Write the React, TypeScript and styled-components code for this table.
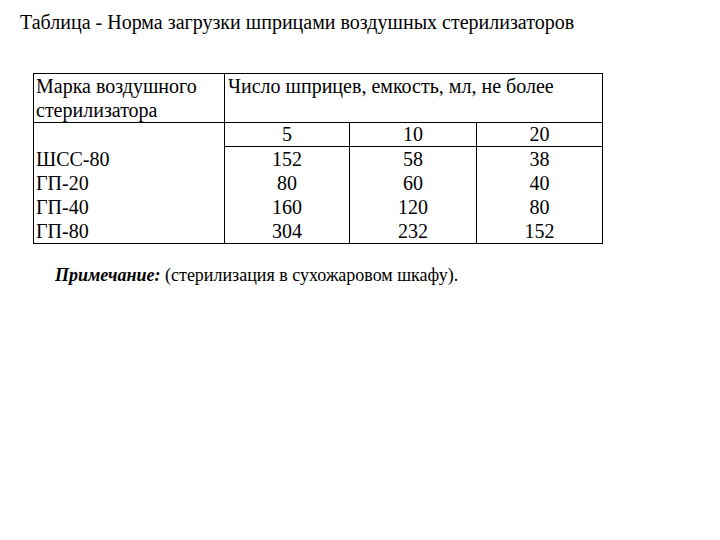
import React, { FC } from "react";
import styled, { createGlobalStyle } from "styled-components";

const GlobalStyle = createGlobalStyle`
    html, body {
        margin: 0;
        padding: 0;
        background: #ffffff;
    }
    body {
        font-family: "Liberation Serif", "Times New Roman", serif;
        color: #000000;
    }
`;

const Page = styled.div`
    width: 720px;
    height: 540px;
    padding: 10px 0 0 20px;
    box-sizing: border-box;
`;

const Title = styled.h1`
    margin: 0;
    font-size: 20px;
    font-weight: normal;
    line-height: 24px;
`;

const Table = styled.table`
    margin: 39px 0 0 13px;
    width: 569px;
    table-layout: fixed;
    border-collapse: collapse;
    font-size: 20px;
    line-height: 24px;

    td {
        border: 1px solid #000;
        padding: 0;
        vertical-align: top;
    }
`;

const NameCell = styled.td`
    padding: 0 2px !important;
    white-space: nowrap;
`;

const HeadCell = styled.td`
    height: 46px;
    padding: 0 3px !important;
    white-space: nowrap;
`;

const NumCell = styled.td<{ $sub?: boolean }>`
    text-align: center;
    line-height: ${(p) => (p.$sub ? "23px" : "24px")};
`;

const Lines = styled.div`
    display: flex;
    flex-direction: column;
`;

const Note = styled.p`
    margin: 19px 0 0 35px;
    font-size: 18px;
    line-height: 24px;

    b {
        font-style: italic;
    }
`;

const models = ["ШСС-80", "ГП-20", "ГП-40", "ГП-80"];
const volumes = [
    { ml: "5", counts: ["152", "80", "160", "304"] },
    { ml: "10", counts: ["58", "60", "120", "232"] },
    { ml: "20", counts: ["38", "40", "80", "152"] },
];
const colWidths = [191, 125, 127, 126];

const App: FC = () => {
    return <Page>
        <GlobalStyle />
        <Title>Таблица - Норма загрузки шприцами воздушных стерилизаторов</Title>
        <Table>
            <colgroup>
                {colWidths.map((w, i) => <col key={i} width={w} />)}
            </colgroup>
            <tbody>
                <tr>
                    <NameCell>Марка воздушного<br />стерилизатора</NameCell>
                    <HeadCell colSpan={3}>Число шприцев, емкость, мл, не более</HeadCell>
                </tr>
                <tr>
                    <NameCell rowSpan={2}>
                        <Lines>
                            <span>&nbsp;</span>
                            {models.map((m) => <span key={m}>{m}</span>)}
                        </Lines>
                    </NameCell>
                    {volumes.map((v) => <NumCell key={v.ml} $sub>{v.ml}</NumCell>)}
                </tr>
                <tr>
                    {volumes.map((v) => (
                        <NumCell key={v.ml}>
                            <Lines>
                                {v.counts.map((c, i) => <span key={i}>{c}</span>)}
                            </Lines>
                        </NumCell>
                    ))}
                </tr>
            </tbody>
        </Table>
        <Note><b>Примечание:</b> (стерилизация в сухожаровом шкафу).</Note>
    </Page>;
}

export default App;
